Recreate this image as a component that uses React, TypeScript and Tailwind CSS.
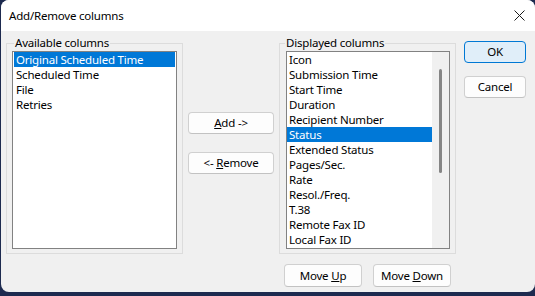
import React from "react";

const available = ["Original Scheduled Time", "Scheduled Time", "File", "Retries"];
const displayed = [
  "Icon",
  "Submission Time",
  "Start Time",
  "Duration",
  "Recipient Number",
  "Status",
  "Extended Status",
  "Pages/Sec.",
  "Rate",
  "Resol./Freq.",
  "T.38",
  "Remote Fax ID",
  "Local Fax ID",
];

function Btn({ children, className = "" }: { children: React.ReactNode; className?: string }) {
  return (
    <button
      className={
        "h-[22px] rounded-[4px] border border-[#d0d0d0] border-b-[#c2c2c2] bg-[#fdfdfd] text-[11.5px] leading-[20px] text-black " +
        className
      }
    >
      {children}
    </button>
  );
}

function ListItem({ label, selected }: { label: string; selected: boolean }) {
  return (
    <div
      className={
        "h-[15px] pl-[2px] text-[11.5px] leading-[15px] whitespace-nowrap " +
        (selected ? "bg-[#0078d7] text-white" : "text-black")
      }
    >
      {label}
    </div>
  );
}

export default function App() {
  return (
    <div
      className="w-[535px] h-[296px] bg-[#1d2a4f] overflow-hidden tracking-[-0.2px]"
      style={{ fontFamily: '"Noto Sans", "Open Sans", sans-serif' }}
    >
      <div className="ml-px w-[534px] h-[292px] rounded-lg bg-[#f0f0f0] overflow-hidden">
        {/* Title bar */}
        <div className="h-[31px] bg-white flex items-center justify-between pl-[8px] pr-[10px]">
          <span className="text-[11.5px] text-black">Add/Remove columns</span>
          <svg width="11" height="11" viewBox="0 0 11 11">
            <path d="M0.5 0.5 L10.5 10.5 M10.5 0.5 L0.5 10.5" stroke="#1a1a1a" strokeWidth="1" fill="none" />
          </svg>
        </div>

        <div className="flex items-start pl-[5px] pt-[4px]">
          {/* Available columns */}
          <fieldset className="w-[177px] h-[219px] border border-[#dcdcdc] px-[5px]">
            <legend className="ml-[2px] px-[1px] text-[11.5px] leading-[16px] text-black">Available columns</legend>
            <div className="w-[165px] h-[198px] border border-[#828282] bg-white px-px">
              {available.map((c, i) => (
                <ListItem key={c} label={c} selected={i === 0} />
              ))}
            </div>
          </fieldset>

          {/* Add / Remove */}
          <div className="ml-[5px] mt-[77px] flex flex-col gap-[18px]">
            <Btn className="w-[86px]">
              <span className="underline">A</span>dd -&gt;
            </Btn>
            <Btn className="w-[86px]">
              &lt;- <span className="underline">R</span>emove
            </Btn>
          </div>

          {/* Displayed columns */}
          <div className="ml-[5px] flex flex-col">
            <fieldset className="w-[177px] h-[219px] border border-[#dcdcdc] pl-[6px] pr-[5px]">
              <legend className="ml-[-1px] px-[1px] text-[11.5px] leading-[16px] text-black">Displayed columns</legend>
              <div className="w-[164px] h-[198px] border border-[#828282] bg-white flex">
                <div className="flex-1">
                  {displayed.map((c) => (
                    <ListItem key={c} label={c} selected={c === "Status"} />
                  ))}
                </div>
                <div className="w-[17px] bg-[#f0f0f0] flex justify-center">
                  <div className="mt-[17px] ml-[-1px] w-[3px] h-[104px] rounded-full bg-[#858585]" />
                </div>
              </div>
            </fieldset>
            <div className="mt-[10px] pl-[5px] flex gap-[11px]">
              <Btn className="w-[78px] h-[23px]">
                Move <span className="underline">U</span>p
              </Btn>
              <Btn className="w-[78px] h-[23px]">
                Move <span className="underline">D</span>own
              </Btn>
            </div>
          </div>

          {/* OK / Cancel */}
          <div className="ml-[8px] mt-[6px] flex flex-col gap-[13px]">
            <button className="w-[62px] h-[22px] rounded-[4px] border border-[#0078d4] bg-[#e0eef9] text-[11.5px] leading-[20px] text-black">
              OK
            </button>
            <Btn className="w-[62px]">Cancel</Btn>
          </div>
        </div>
      </div>
    </div>
  );
}
